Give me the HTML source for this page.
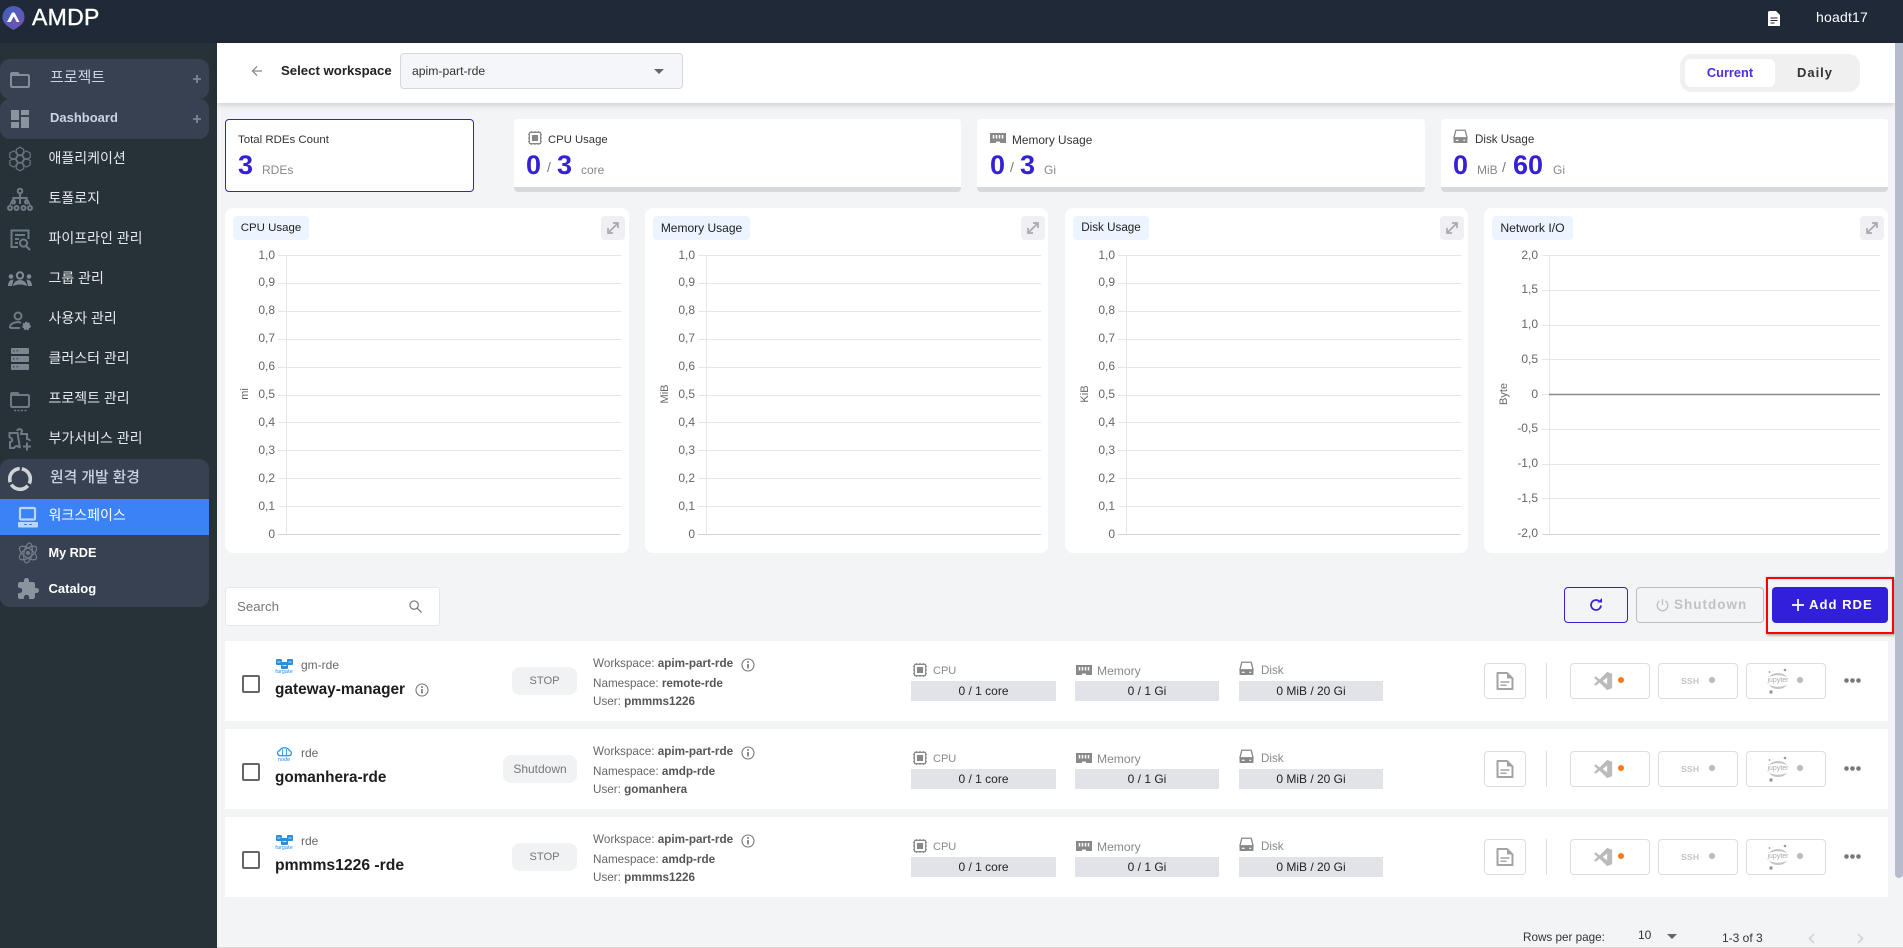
<!DOCTYPE html>
<html lang="ko"><head><meta charset="utf-8"><title>AMDP</title>
<style>
*{box-sizing:border-box}
html,body{margin:0;padding:0;width:1903px;height:948px;overflow:hidden;background:#f3f4f6;font-family:"Liberation Sans","Noto Sans CJK KR",sans-serif}
.a{position:absolute}
.t{position:absolute;white-space:nowrap;line-height:20px;height:20px}
svg{position:absolute;overflow:visible}
.ko{color:#e5e7eb;font-size:14px;left:48.500px}
.card{position:absolute;top:119px;height:73px;background:#fff;border-radius:4px;border-bottom:5px solid #d8d9dd}
.chart{position:absolute;top:208px;height:345px;background:#fff;border-radius:8px}
.badge{position:absolute;top:216px;height:24px;background:#ebf4ff;border-radius:4px;line-height:24px;text-align:center;color:#222}
.exp{position:absolute;top:216px;width:24px;height:24px;background:#f0f0f4;border-radius:4px}
.num{color:#3520d8;font-weight:bold;font-size:27px;line-height:30px;height:30px;position:absolute;top:150px}
.sl{color:#777;font-size:14px;position:absolute;top:157px;line-height:20px}
.u{color:#888;font-size:12px;position:absolute;top:160px;line-height:20px}
.row{position:absolute;left:225px;width:1663px;height:80px;background:#fff}
.in{position:absolute;left:-225px;top:0;width:1903px;height:80px}
.cb{position:absolute;left:242px;top:34px;width:18px;height:18px;border:2px solid #666;border-radius:2px}
.sub{left:301px;top:14px;font-size:12px;color:#666}
.name{left:275px;top:39px;font-weight:bold;color:#1c1c1c}
.st{position:absolute;top:26px;height:28px;background:#f1f2f4;border-radius:8px;line-height:28px;text-align:center;color:#777;left:512px;width:65px;font-size:11.200px}
.m{left:593px;font-size:11.700px;color:#666}
.m b{color:#555}
.lb{color:#888;top:20px}
.bar{position:absolute;top:40px;height:20px;background:#e2e3e8;font-size:12px;line-height:20px;text-align:center;color:#222}
.btn{position:absolute;top:22px;height:36px;background:#fff;border:1px solid #ddd;border-radius:4px}
.ssh{left:1681px;top:30px;font-size:8.600px;font-weight:bold;letter-spacing:.2px;color:#c4c4c4}
.jt{left:1767px;top:30px;width:22px;text-align:center;font-size:7px;color:#aaa}
.dot{position:absolute;top:36px;width:6px;height:6px;border-radius:50%;background:#bbb}
.fg{left:274px;top:21px;width:20px;text-align:center;font-size:5.600px;color:#2c8fdc}
</style></head><body>
<svg width="0" height="0" style="position:absolute"><defs>
<symbol id="cpu" viewBox="0 0 16 16"><path d="M3 1.500h10a1.500 1.500 0 0 1 1.500 1.500v10a1.500 1.500 0 0 1-1.500 1.500H3A1.500 1.500 0 0 1 1.500 13V3A1.500 1.500 0 0 1 3 1.500z" fill="none" stroke="#888" stroke-width="1.500"/><rect x="4.500" y="4.500" width="7" height="7" fill="#888"/><path d="M4 0v1.500M8 0v1.500M12 0v1.500M4 14.500V16M8 14.500V16M12 14.500V16M0 4h1.500M0 8h1.500M0 12h1.500M14.500 4H16M14.500 8H16M14.500 12H16" stroke="#888"/></symbol>
<symbol id="mem" viewBox="0 0 16 12"><path d="M0 0h16v10h-5.500l-1-1.500h-3l-1 1.500H0z" fill="#888"/><path d="M3.500 2v3.500M6.500 2v3.500M9.500 2v3.500M12.500 2v3.500" stroke="#fff" stroke-width="1.500"/></symbol>
<symbol id="disk" viewBox="0 0 16 15"><path d="M3 .8h10l2 8H1z" fill="none" stroke="#888" stroke-width="1.400"/><rect x=".6" y="8.600" width="14.800" height="5.800" fill="#888"/><path d="M3 11.500h3M11 11.500h2" stroke="#fff" stroke-width="1.200"/></symbol>
<symbol id="info" viewBox="0 0 14 14"><circle cx="7" cy="7" r="6" fill="none" stroke="#777" stroke-width="1.100"/><path d="M7 6v4.500" stroke="#555" stroke-width="1.300"/><circle cx="7" cy="4" r=".9" fill="#555"/></symbol>
<symbol id="docb" viewBox="0 0 18 18"><path d="M1.500 1h9.500l5.500 5.500V17h-15z" fill="none" stroke="#a3a3a3" stroke-width="2" stroke-linejoin="round"/><path d="M11 1v5.500h5.500z" fill="#a3a3a3"/><path d="M4.500 10h9M4.500 13.300h6" stroke="#a3a3a3" stroke-width="1.500"/></symbol>
<symbol id="vs" viewBox="0 0 24 24"><path fill="#bbb" fill-rule="evenodd" d="M17 1 8 10 3.500 6.500 1 8l4.500 4L1 16l2.500 1.500L8 14l9 9 6-2.500v-17zM17 8v8l-5.500-4z"/></symbol>
<symbol id="jup" viewBox="0 0 22 26"><path d="M2 9.500C5 3.500 17 3.500 20 9.500 16 6.500 6 6.500 2 9.500zM2 16.500c3 6 15 6 18 0-4 3-14 3-18 0z" fill="#c4c4c4"/><circle cx="18" cy="2" r="1.300" fill="#999"/><circle cx="4" cy="24" r="1.700" fill="#999"/><circle cx="2.500" cy="4" r=".9" fill="#999"/></symbol>
<symbol id="far" viewBox="0 0 17 10"><g fill="#2c8fdc"><rect x="0" y="0" width="6" height="6" rx="1"/><rect x="11" y="0" width="6" height="6" rx="1"/><rect x="5" y="3" width="7" height="7" rx="1"/></g><path d="M1.500 3h3M12.500 3h3M6.500 6.500h4" stroke="#fff" stroke-width=".7"/></symbol>
<symbol id="nod" viewBox="0 0 18 12"><path d="M5 10C1 10 .5 5 4 4.500 5 .5 13 .5 14 4.500c3.500.5 3 5.500-1 5.500z" fill="none" stroke="#2c8fdc" stroke-width="1.300"/><path d="M7 3v7M11 3v7" stroke="#2c8fdc"/></symbol>
<path id="hex" d="M0-4.300 3.700-2.150V2.150L0 4.300-3.700 2.150V-2.150z"/>
</defs></svg>

<!-- header -->
<div class="a" style="left:0;top:0;width:1903px;height:43px;background:#1f2937"></div>
<svg style="left:2px;top:6px" width="23" height="24" viewBox="0 0 23 24"><defs><linearGradient id="lg" x1="0" y1="0" x2="1" y2="1"><stop offset="0" stop-color="#3a63b8"/><stop offset="1" stop-color="#7a4fb8"/></linearGradient></defs><path d="M11.500 0a11 11 0 0 1 11 11c0 6-4 9-11 13C4.500 20 .5 17 .5 11a11 11 0 0 1 11-11z" fill="url(#lg)"/><path d="M5 16 10 6.500h2.500L17.500 16h-2.800l-3-5.500-3 5.500z" fill="#fff"/></svg>
<div class="t" style="left:32px;top:6px;height:22px;line-height:22px;font-size:23px;letter-spacing:.3px;color:#fff;-webkit-text-stroke:.4px #fff">AMDP</div>
<svg style="left:1768px;top:11px" width="12" height="15" viewBox="0 0 12 15"><path d="M1 0h7l4 4v11H0V1z" fill="#fff"/><path d="M2.500 7h7M2.500 9.500h7M2.500 12h4" stroke="#1f2937"/></svg>
<div class="t" style="left:1816px;top:7px;font-size:14px;color:#fff;letter-spacing:.2px">hoadt17</div>

<!-- sidebar -->
<div class="a" style="left:0;top:43px;width:217px;height:905px;background:#263238"></div>
<div class="a" style="left:0;top:59px;width:209px;height:40px;background:#374151;border-radius:10px"></div>
<div class="a" style="left:0;top:99px;width:209px;height:40px;background:#374151;border-radius:10px"></div>
<div class="a" style="left:0;top:459px;width:209px;height:148px;background:#374151;border-radius:10px"></div>
<div class="a" style="left:0;top:499px;width:209px;height:36px;background:#3b82f6"></div>

<svg style="left:0;top:43px" width="217" height="600" viewBox="0 43 217 600" fill="none" stroke="#6f7a85" stroke-width="1.800">
<!-- folder -->
<path transform="translate(8 68)" fill="#848c98" stroke="none" d="M20 6h-8l-2-2H4c-1.100 0-1.990.9-1.990 2L2 18c0 1.100.9 2 2 2h16c1.100 0 2-.9 2-2V8c0-1.100-.9-2-2-2zm0 12H4V8h16v10z"/>
<path d="M193 79h8M197 75v8M193 119h8M197 115v8" stroke="#7d8592" stroke-width="1.800"/>
<!-- dashboard -->
<g fill="#8a939e" stroke="none"><rect x="11" y="110" width="8" height="10"/><rect x="11" y="122" width="8" height="6"/><rect x="21" y="110" width="8" height="5"/><rect x="21" y="117" width="8" height="11"/></g>
<!-- app -->
<g stroke-width="1.200" stroke="#69747f"><use href="#hex" x="20" y="159"/><use href="#hex" x="20" y="151.500"/><use href="#hex" x="26.500" y="155.200"/><use href="#hex" x="26.500" y="162.800"/><use href="#hex" x="20" y="166.500"/><use href="#hex" x="13.500" y="162.800"/><use href="#hex" x="13.500" y="155.200"/></g>
<!-- topology -->
<g stroke-width="2" stroke="#6f7a85"><circle cx="20" cy="191" r="2.300"/><path d="M20 194v10M13.500 202v-4h13v4"/><path d="M13 199l-3 6M27 199l3 6" stroke-width="1.400"/><circle cx="10" cy="208" r="2"/><circle cx="16.500" cy="208" r="2"/><circle cx="23.500" cy="208" r="2"/><circle cx="30" cy="208" r="2"/><circle cx="13.500" cy="202" r="1.500"/><circle cx="26.500" cy="202" r="1.500"/></g>
<!-- pipeline -->
<path d="M18 247h-6.500v-16.500h17V239M15 235h10M15 239h4M15 243h3" stroke-width="2"/><circle cx="23.500" cy="243" r="3.600" stroke-width="2"/><path d="M26 246l4 4" stroke-width="2"/>
<!-- group -->
<g fill="#7f8993" stroke="none"><path d="M8 286c0-5 3-6.500 5.500-6.500l-1.500 6.500zM32 286c0-5-3-6.500-5.500-6.500l1.500 6.500z"/><path d="M13 286c1-8 13-8 14 0-5-2-9-2-14 0z"/><circle cx="11" cy="276.500" r="2.300"/><circle cx="29" cy="276.500" r="2.300"/></g><circle cx="20" cy="275.500" r="3.200" stroke-width="2" stroke="#7f8993"/>
<!-- user gear -->
<circle cx="18" cy="316" r="3.500" stroke-width="2"/><path d="M10 328v-1c0-3 4-5 9-5l2 1M10 328h10" stroke-width="2"/><circle cx="26.500" cy="326" r="3.500" fill="#7f8993" stroke="#7f8993" stroke-width="1.500" stroke-dasharray="2 1"/>
<!-- cluster -->
<g stroke="none"><rect x="11" y="348" width="18" height="6" rx="1" fill="#7c8690"/><rect x="11" y="356" width="18" height="6" rx="1" fill="#7c8690"/><rect x="11" y="364" width="18" height="6" rx="1" fill="#7c8690"/><path d="M13 350h1.500v1.500H13zM16.500 350H18v1.500h-1.500zM13 358h1.500v1.500H13zM16.500 358H18v1.500h-1.500zM13 366h1.500v1.500H13zM16.500 366H18v1.500h-1.500z" fill="#46505a"/></g>
<!-- project monitor -->
<path transform="translate(8 388)" fill="#6f7a85" stroke="none" d="M20 6h-8l-2-2H4c-1.100 0-1.990.9-1.990 2L2 18c0 1.100.9 2 2 2h16c1.100 0 2-.9 2-2V8c0-1.100-.9-2-2-2zm0 12H4V8h16v10z"/><path d="M14 410.500h13" stroke-width="1.500" stroke-dasharray="2 1.500"/>
<!-- puzzle add -->
<path d="M17 431c1-3 5-2 5 0 0 1-1 1-1 3h6v5c2 0 3 1 3 2M20 448c-2-3-5-2-6 0h-4v-6c2 0 3-2 1.500-3.500-1-1-2.500-.5-2-2.500v-3h8z" stroke-width="2"/><path d="M23 446.500h8M27 442.500v8" stroke-width="2"/>
<!-- spinner -->
<circle cx="20" cy="479" r="10.300" stroke="#d0d3d7" stroke-width="3.600" stroke-dasharray="19 2.570" transform="rotate(-80 20 479)"/>
<!-- laptop -->
<g><rect x="20" y="508" width="15" height="11.500" rx="1" stroke="#bcd6fd" stroke-width="2.200"/><rect x="18" y="522" width="20" height="5.500" rx="1" fill="#bcd6fd" stroke="none"/><path d="M24 524.500h3M29 524.500h3" stroke="#3b82f6" stroke-width="1"/></g>
<!-- atom -->
<g stroke-width="1.300"><ellipse cx="28" cy="553" rx="10" ry="4.500" transform="rotate(-35 28 553)"/><ellipse cx="28" cy="553" rx="10" ry="4.500" transform="rotate(35 28 553)"/><ellipse cx="28" cy="553" rx="4" ry="10" transform="rotate(10 28 553)"/><circle cx="28" cy="553" r="1.500" fill="#6f7a85"/></g>
<!-- puzzle filled -->
<path transform="translate(16 577)" fill="#8a939e" stroke="none" d="M20.500 11H19V7c0-1.100-.9-2-2-2h-4V3.500C13 2.120 11.880 1 10.500 1S8 2.120 8 3.500V5H4c-1.100 0-1.990.9-1.990 2v3.800H3.500c1.490 0 2.700 1.210 2.700 2.700s-1.210 2.700-2.700 2.700H2V20c0 1.100.9 2 2 2h3.800v-1.500c0-1.490 1.210-2.700 2.700-2.700 1.490 0 2.700 1.210 2.700 2.700V22H17c1.100 0 2-.9 2-2v-4h1.500c1.380 0 2.500-1.120 2.500-2.500S21.880 11 20.500 11z"/>
</svg>

<div class="t" style="left:50px;top:68px;font-size:15px;color:#cbd5e1">프로젝트</div>
<div class="t" style="left:50px;top:108px;font-size:13px;font-weight:bold;color:#cbd5e1">Dashboard</div>
<div class="t ko" style="top:148px">애플리케이션</div>
<div class="t ko" style="top:188px">토폴로지</div>
<div class="t ko" style="top:228px">파이프라인 관리</div>
<div class="t ko" style="top:268px">그룹 관리</div>
<div class="t ko" style="top:308px">사용자 관리</div>
<div class="t ko" style="top:348px">클러스터 관리</div>
<div class="t ko" style="top:388px">프로젝트 관리</div>
<div class="t ko" style="top:428px">부가서비스 관리</div>
<div class="t" style="left:50px;top:468px;font-size:14.800px;font-weight:500;color:#cbd5e1">원격 개발 환경</div>
<div class="t ko" style="top:505px;color:#fff">워크스페이스</div>
<div class="t ko" style="top:543px;color:#fff;font-weight:bold;font-size:12.700px">My RDE</div>
<div class="t ko" style="top:579px;color:#fff;font-weight:bold;font-size:13px">Catalog</div>

<!-- top bar -->
<div class="a" style="left:217px;top:43px;width:1678px;height:60px;background:#fff;box-shadow:0 2px 6px rgba(0,0,0,.16)"></div>
<svg style="left:251px;top:65px" width="12" height="12" viewBox="0 0 12 12" fill="none" stroke="#888" stroke-width="1.300"><path d="M11 6H1.500M6 1.500 1.500 6 6 10.500"/></svg>
<div class="t" style="left:281px;top:61px;font-size:13.200px;font-weight:bold;color:#222">Select workspace</div>
<div class="a" style="left:400px;top:53px;width:283px;height:36px;background:#f4f6f9;border:1px solid #d5d8dc;border-radius:4px"></div>
<div class="t" style="left:412px;top:61px;font-size:12.200px;color:#333">apim-part-rde</div>
<div class="a" style="left:654px;top:69px;border-left:5px solid transparent;border-right:5px solid transparent;border-top:5px solid #666"></div>
<div class="a" style="left:1680px;top:54px;width:180px;height:38px;background:#f0f0f0;border-radius:12px"></div>
<div class="a" style="left:1685px;top:59px;width:90px;height:28px;background:#fff;border-radius:6px;text-align:center;font-size:12.800px;line-height:27px;font-weight:bold;color:#4a2ee0">Current</div>
<div class="t" style="left:1775px;width:80px;top:63px;text-align:center;font-size:13px;font-weight:bold;letter-spacing:1px;color:#333">Daily</div>

<!-- stat cards -->
<div class="a" style="left:225px;top:119px;width:249px;height:73px;background:#fff;border:1px solid #3520d8;border-radius:4px"></div>
<div class="t" style="left:238px;top:130px;font-size:11.450px;color:#333">Total RDEs Count</div>
<div class="num" style="left:238px">3</div>
<div class="u" style="left:262px">RDEs</div>

<div class="card" style="left:514px;width:447px"></div>
<svg style="left:528px;top:131px" width="14" height="14"><use href="#cpu"/></svg>
<div class="t" style="left:548px;top:130px;font-size:11.300px;color:#333">CPU Usage</div>
<div class="num" style="left:526px">0</div><div class="sl" style="left:547px">/</div><div class="num" style="left:557px">3</div><div class="u" style="left:581px">core</div>

<div class="card" style="left:977px;width:448px"></div>
<svg style="left:990px;top:133px" width="16" height="12"><use href="#mem"/></svg>
<div class="t" style="left:1012px;top:130px;font-size:11.850px;color:#333">Memory Usage</div>
<div class="num" style="left:990px">0</div><div class="sl" style="left:1010px">/</div><div class="num" style="left:1020px">3</div><div class="u" style="left:1044px">Gi</div>

<div class="card" style="left:1441px;width:447px"></div>
<svg style="left:1453px;top:129px" width="15" height="15"><use href="#disk"/></svg>
<div class="t" style="left:1475px;top:130px;font-size:11.600px;color:#333">Disk Usage</div>
<div class="num" style="left:1453px">0</div><div class="u" style="left:1477px">MiB</div><div class="sl" style="left:1502px">/</div><div class="num" style="left:1513px">60</div><div class="u" style="left:1553px">Gi</div>

<!-- charts -->
<div class="chart" style="left:225px;width:404px"></div>
<div class="chart" style="left:645px;width:403px"></div>
<div class="chart" style="left:1065px;width:403px"></div>
<div class="chart" style="left:1484px;width:404px"></div>
<div class="badge" style="left:233px;width:76px;font-size:11.450px">CPU Usage</div>
<div class="badge" style="left:653px;width:97px;font-size:12px">Memory Usage</div>
<div class="badge" style="left:1073px;width:76px;font-size:11.650px">Disk Usage</div>
<div class="badge" style="left:1492px;width:81px;font-size:12.200px">Network I/O</div>
<div class="exp" style="left:601px"></div><div class="exp" style="left:1021px"></div><div class="exp" style="left:1440px"></div><div class="exp" style="left:1860px"></div>
<svg style="left:0;top:0" width="1903" height="948" viewBox="0 0 1903 948" font-family="Liberation Sans, sans-serif" font-size="12" fill="#666">
<g fill="none" stroke="#a9a9b2" stroke-width="1.700"><path d="M608 233l10-10M613 223h5v5M608 228v5h5M1028 233l10-10M1033 223h5v5M1028 228v5h5M1447 233l10-10M1452 223h5v5M1447 228v5h5M1867 233l10-10M1872 223h5v5M1867 228v5h5"/></g>
<g stroke="#e6e6e6" fill="none">
<path d="M278 255.500H621M278 283.500H621M278 311.500H621M278 339.500H621M278 367.500H621M278 395.500H621M278 422.500H621M278 450.500H621M278 478.500H621M278 506.500H621M286.500 255V534"/>
<path d="M698 255.500H1041M698 283.500H1041M698 311.500H1041M698 339.500H1041M698 367.500H1041M698 395.500H1041M698 422.500H1041M698 450.500H1041M698 478.500H1041M698 506.500H1041M706.500 255V534"/>
<path d="M1118 255.500H1461M1118 283.500H1461M1118 311.500H1461M1118 339.500H1461M1118 367.500H1461M1118 395.500H1461M1118 422.500H1461M1118 450.500H1461M1118 478.500H1461M1118 506.500H1461M1126.500 255V534"/>
<path d="M1542 255.500H1880M1542 290.500H1880M1542 325.500H1880M1542 359.500H1880M1542 394.500H1549M1542 429.500H1880M1542 464.500H1880M1542 498.500H1880M1549.500 255V534"/>
</g>
<g stroke="#d4d4d4" fill="none"><path d="M278 534.500H621M698 534.500H1041M1118 534.500H1461M1542 534.500H1880"/></g>
<path d="M1549 394.500H1880" stroke="#8a8a8a" stroke-width="1.500"/>
<g text-anchor="end">
<text x="275" y="259">1,0</text><text x="275" y="286">0,9</text><text x="275" y="314">0,8</text><text x="275" y="342">0,7</text><text x="275" y="370">0,6</text><text x="275" y="398">0,5</text><text x="275" y="426">0,4</text><text x="275" y="454">0,3</text><text x="275" y="482">0,2</text><text x="275" y="510">0,1</text><text x="275" y="538">0</text>
<text x="695" y="259">1,0</text><text x="695" y="286">0,9</text><text x="695" y="314">0,8</text><text x="695" y="342">0,7</text><text x="695" y="370">0,6</text><text x="695" y="398">0,5</text><text x="695" y="426">0,4</text><text x="695" y="454">0,3</text><text x="695" y="482">0,2</text><text x="695" y="510">0,1</text><text x="695" y="538">0</text>
<text x="1115" y="259">1,0</text><text x="1115" y="286">0,9</text><text x="1115" y="314">0,8</text><text x="1115" y="342">0,7</text><text x="1115" y="370">0,6</text><text x="1115" y="398">0,5</text><text x="1115" y="426">0,4</text><text x="1115" y="454">0,3</text><text x="1115" y="482">0,2</text><text x="1115" y="510">0,1</text><text x="1115" y="538">0</text>
<text x="1538" y="259">2,0</text><text x="1538" y="293">1,5</text><text x="1538" y="328">1,0</text><text x="1538" y="363">0,5</text><text x="1538" y="398">0</text><text x="1538" y="432">-0,5</text><text x="1538" y="467">-1,0</text><text x="1538" y="502">-1,5</text><text x="1538" y="537">-2,0</text>
</g>
<g text-anchor="middle" font-size="11">
<text transform="translate(248 394) rotate(-90)">mi</text>
<text transform="translate(668 394) rotate(-90)">MiB</text>
<text transform="translate(1088 394) rotate(-90)">KiB</text>
<text transform="translate(1507 394) rotate(-90)">Byte</text>
</g>
</svg>

<!-- toolbar -->
<div class="a" style="left:225px;top:587px;width:215px;height:39px;background:#fff;border:1px solid #e5e7eb;border-radius:3px"></div>
<div class="t" style="left:237px;top:596.500px;font-size:13.250px;color:#777">Search</div>
<svg style="left:409px;top:600px" width="13" height="13" viewBox="0 0 14 14" fill="none" stroke="#777" stroke-width="1.300"><circle cx="5.500" cy="5.500" r="4.500"/><path d="M9 9l4.500 4.500"/></svg>
<div class="a" style="left:1564px;top:587px;width:64px;height:36px;border:1px solid #3520d8;border-radius:4px"></div>
<svg style="left:1589px;top:598px" width="14" height="14" viewBox="0 0 14 14" fill="none" stroke="#3520d8" stroke-width="1.700"><path d="M12 7.500a5 5 0 1 1-2-4.500"/><path d="M8.500 4.500h4.500V0z" fill="#3520d8" stroke="none"/></svg>
<div class="a" style="left:1636px;top:587px;width:128px;height:36px;border:1px solid #bdbdbd;border-radius:4px"></div>
<svg style="left:1656px;top:598px" width="13" height="14" viewBox="0 0 13 14" fill="none" stroke="#c2c2c2" stroke-width="1.400"><path d="M6.500 1v6M3.500 3a5.300 5.300 0 1 0 6 0"/></svg>
<div class="t" style="left:1674px;top:595px;font-size:13.500px;font-weight:bold;letter-spacing:1px;color:#c2c2c2">Shutdown</div>
<div class="a" style="left:1772px;top:587px;width:116px;height:36px;background:#321fdb;border-radius:4px"></div>
<svg style="left:1792px;top:599px" width="12" height="12"><path d="M6 0v12M0 6h12" stroke="#fff" stroke-width="1.700"/></svg>
<div class="t" style="left:1809px;top:595px;font-size:13.100px;font-weight:bold;letter-spacing:1px;color:#fff">Add RDE</div>
<div class="a" style="left:1766px;top:577px;width:128px;height:57px;border:2px solid #f00;box-shadow:1px 1px 3px rgba(0,0,0,.4)"></div>

<!-- row 1 -->
<div class="row" style="top:641px"><div class="in">
<div class="cb"></div>
<svg style="left:276px;top:18px" width="17" height="10"><use href="#far"/></svg>
<div class="t fg">fargate</div>
<div class="t sub">gm-rde</div>
<div class="t name" style="font-size:15.400px">gateway-manager</div>
<svg style="left:415px;top:42px" width="14" height="14"><use href="#info"/></svg>
<div class="st">STOP</div>
<div class="t m" style="top:13px">Workspace: <b>apim-part-rde</b></div><svg style="left:741px;top:17px" width="14" height="14"><use href="#info"/></svg>
<div class="t m" style="top:33px">Namespace: <b>remote-rde</b></div>
<div class="t m" style="top:51px">User: <b>pmmms1226</b></div>
<svg style="left:913px;top:22px" width="14" height="14"><use href="#cpu"/></svg><div class="t lb" style="left:933px;font-size:11px">CPU</div><div class="bar" style="left:911px;width:145px">0 / 1 core</div>
<svg style="left:1076px;top:24px" width="16" height="12"><use href="#mem"/></svg><div class="t lb" style="left:1097px;font-size:12.100px">Memory</div><div class="bar" style="left:1075px;width:144px">0 / 1 Gi</div>
<svg style="left:1239px;top:20px" width="15" height="15"><use href="#disk"/></svg><div class="t lb" style="left:1261px;font-size:11.600px">Disk</div><div class="bar" style="left:1239px;width:144px">0 MiB / 20 Gi</div>
<div class="btn" style="left:1484px;width:42px"></div><svg style="left:1496px;top:31px" width="18" height="18"><use href="#docb"/></svg>
<div class="a" style="left:1546px;top:22px;width:1px;height:36px;background:#ddd"></div>
<div class="btn" style="left:1570px;width:80px"></div><svg style="left:1593px;top:30px" width="20" height="20"><use href="#vs"/></svg><div class="dot" style="left:1618px;background:#ff7a12"></div>
<div class="btn" style="left:1658px;width:80px"></div><div class="t ssh">SSH</div><div class="dot" style="left:1709px"></div>
<div class="btn" style="left:1746px;width:80px"></div><svg style="left:1767px;top:27px" width="22" height="26"><use href="#jup"/></svg><div class="t jt">jupyter</div><div class="dot" style="left:1797px"></div>
<svg style="left:1844px;top:37px" width="17" height="5"><circle cx="2.500" cy="2.500" r="2.300" fill="#777"/><circle cx="8.500" cy="2.500" r="2.300" fill="#777"/><circle cx="14.500" cy="2.500" r="2.300" fill="#777"/></svg>
</div></div>

<!-- row 2 -->
<div class="row" style="top:729px"><div class="in">
<div class="cb"></div>
<svg style="left:276px;top:17px" width="17" height="12"><use href="#nod"/></svg>
<div class="t fg">node</div>
<div class="t sub">rde</div>
<div class="t name" style="font-size:15.300px">gomanhera-rde</div>
<div class="st" style="left:503px;width:74px;font-size:12px">Shutdown</div>
<div class="t m" style="top:13px">Workspace: <b>apim-part-rde</b></div><svg style="left:741px;top:17px" width="14" height="14"><use href="#info"/></svg>
<div class="t m" style="top:33px">Namespace: <b>amdp-rde</b></div>
<div class="t m" style="top:51px">User: <b>gomanhera</b></div>
<svg style="left:913px;top:22px" width="14" height="14"><use href="#cpu"/></svg><div class="t lb" style="left:933px;font-size:11px">CPU</div><div class="bar" style="left:911px;width:145px">0 / 1 core</div>
<svg style="left:1076px;top:24px" width="16" height="12"><use href="#mem"/></svg><div class="t lb" style="left:1097px;font-size:12.100px">Memory</div><div class="bar" style="left:1075px;width:144px">0 / 1 Gi</div>
<svg style="left:1239px;top:20px" width="15" height="15"><use href="#disk"/></svg><div class="t lb" style="left:1261px;font-size:11.600px">Disk</div><div class="bar" style="left:1239px;width:144px">0 MiB / 20 Gi</div>
<div class="btn" style="left:1484px;width:42px"></div><svg style="left:1496px;top:31px" width="18" height="18"><use href="#docb"/></svg>
<div class="a" style="left:1546px;top:22px;width:1px;height:36px;background:#ddd"></div>
<div class="btn" style="left:1570px;width:80px"></div><svg style="left:1593px;top:30px" width="20" height="20"><use href="#vs"/></svg><div class="dot" style="left:1618px;background:#ff7a12"></div>
<div class="btn" style="left:1658px;width:80px"></div><div class="t ssh">SSH</div><div class="dot" style="left:1709px"></div>
<div class="btn" style="left:1746px;width:80px"></div><svg style="left:1767px;top:27px" width="22" height="26"><use href="#jup"/></svg><div class="t jt">jupyter</div><div class="dot" style="left:1797px"></div>
<svg style="left:1844px;top:37px" width="17" height="5"><circle cx="2.500" cy="2.500" r="2.300" fill="#777"/><circle cx="8.500" cy="2.500" r="2.300" fill="#777"/><circle cx="14.500" cy="2.500" r="2.300" fill="#777"/></svg>
</div></div>

<!-- row 3 -->
<div class="row" style="top:817px"><div class="in">
<div class="cb"></div>
<svg style="left:276px;top:18px" width="17" height="10"><use href="#far"/></svg>
<div class="t fg">fargate</div>
<div class="t sub">rde</div>
<div class="t name" style="font-size:15.700px">pmmms1226 -rde</div>
<div class="st">STOP</div>
<div class="t m" style="top:13px">Workspace: <b>apim-part-rde</b></div><svg style="left:741px;top:17px" width="14" height="14"><use href="#info"/></svg>
<div class="t m" style="top:33px">Namespace: <b>amdp-rde</b></div>
<div class="t m" style="top:51px">User: <b>pmmms1226</b></div>
<svg style="left:913px;top:22px" width="14" height="14"><use href="#cpu"/></svg><div class="t lb" style="left:933px;font-size:11px">CPU</div><div class="bar" style="left:911px;width:145px">0 / 1 core</div>
<svg style="left:1076px;top:24px" width="16" height="12"><use href="#mem"/></svg><div class="t lb" style="left:1097px;font-size:12.100px">Memory</div><div class="bar" style="left:1075px;width:144px">0 / 1 Gi</div>
<svg style="left:1239px;top:20px" width="15" height="15"><use href="#disk"/></svg><div class="t lb" style="left:1261px;font-size:11.600px">Disk</div><div class="bar" style="left:1239px;width:144px">0 MiB / 20 Gi</div>
<div class="btn" style="left:1484px;width:42px"></div><svg style="left:1496px;top:31px" width="18" height="18"><use href="#docb"/></svg>
<div class="a" style="left:1546px;top:22px;width:1px;height:36px;background:#ddd"></div>
<div class="btn" style="left:1570px;width:80px"></div><svg style="left:1593px;top:30px" width="20" height="20"><use href="#vs"/></svg><div class="dot" style="left:1618px;background:#ff7a12"></div>
<div class="btn" style="left:1658px;width:80px"></div><div class="t ssh">SSH</div><div class="dot" style="left:1709px"></div>
<div class="btn" style="left:1746px;width:80px"></div><svg style="left:1767px;top:27px" width="22" height="26"><use href="#jup"/></svg><div class="t jt">jupyter</div><div class="dot" style="left:1797px"></div>
<svg style="left:1844px;top:37px" width="17" height="5"><circle cx="2.500" cy="2.500" r="2.300" fill="#777"/><circle cx="8.500" cy="2.500" r="2.300" fill="#777"/><circle cx="14.500" cy="2.500" r="2.300" fill="#777"/></svg>
</div></div>

<!-- pagination -->
<div class="t" style="left:1523px;top:928px;font-size:11.700px;color:#333">Rows per page:</div>
<div class="t" style="left:1638px;top:925px;font-size:12px;color:#333">10</div>
<div class="a" style="left:1667px;top:934px;border-left:5px solid transparent;border-right:5px solid transparent;border-top:5px solid #666"></div>
<div class="t" style="left:1722px;top:928px;font-size:12px;color:#333">1-3 of 3</div>
<svg style="left:1808px;top:933px" width="60" height="11" fill="none" stroke="#ccc" stroke-width="1.400"><path d="M6 1 1.500 5.500 6 10M50 1l4.500 4.500L50 10"/></svg>
<div class="a" style="left:217px;top:947px;width:1686px;height:1px;background:#d8d8d8"></div>

<!-- scrollbar -->
<div class="a" style="left:1895px;top:43px;width:8px;height:835px;background:#b5bccb;border-radius:0 0 4px 4px"></div>
</body></html>
